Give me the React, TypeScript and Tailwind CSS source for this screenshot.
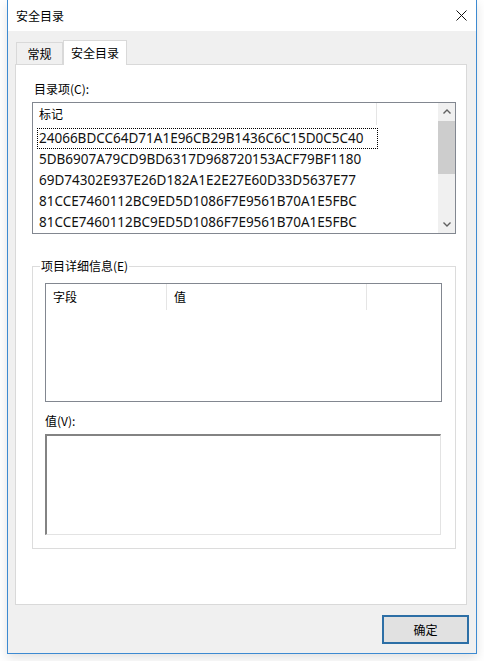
import React from "react";

const rows = [
  "24066BDCC64D71A1E96CB29B1436C6C15D0C5C40",
  "5DB6907A79CD9BD6317D968720153ACF79BF1180",
  "69D74302E937E26D182A1E2E27E60D33D5637E77",
  "81CCE7460112BC9ED5D1086F7E9561B70A1E5FBC",
  "81CCE7460112BC9ED5D1086F7E9561B70A1E5FBC",
];

const cjk = { fontFamily: '"Noto Sans CJK SC", "Noto Sans", sans-serif' };
const latin = { fontFamily: '"Noto Sans", "Noto Sans CJK SC", sans-serif' };

function Chevron({ up }: { up?: boolean }) {
  return (
    <svg width="8" height="5" viewBox="0 0 8 5">
      <polyline
        points={up ? "0.5,4.5 4,1 7.5,4.5" : "0.5,0.5 4,4 7.5,0.5"}
        fill="none"
        stroke="#606060"
        strokeWidth="1.4"
      />
    </svg>
  );
}

export default function App() {
  return (
    <div className="min-h-screen bg-white text-black" style={cjk}>
      {/* window */}
      <div className="ml-[7px] w-[470px] h-[654px] border border-t-0 border-[#3d8ad1] bg-[#f0f0f0] flex flex-col shadow-[0_4px_10px_rgba(0,0,0,0.12)]">
        {/* title bar */}
        <div className="h-[31px] bg-white flex items-center justify-between pl-[8px] pr-[9px] shrink-0">
          <span className="text-[12px] leading-[16px]">安全目录</span>
          <svg width="11" height="11" viewBox="0 0 11 11">
            <path d="M0.5 0.5 L10.5 10.5 M10.5 0.5 L0.5 10.5" stroke="#111" strokeWidth="1" />
          </svg>
        </div>

        <div className="px-[7px] pt-[9px] flex flex-col">
          {/* tabs */}
          <div className="flex items-end h-[24px] pl-[1px]">
            <div className="w-[47px] h-[22px] border border-b-0 border-[#d9d9d9] bg-[#f0f0f0] text-[12px] flex items-center justify-center">
              常规
            </div>
            <div className="relative z-10 -mb-px w-[64px] h-[25px] border border-b-0 border-[#d9d9d9] bg-white text-[12px] flex items-center justify-center">
              安全目录
            </div>
          </div>

          {/* tab panel */}
          <div className="w-[452px] h-[541px] bg-white border border-[#d9d9d9] flex flex-col">
            <div className="ml-[18px] mt-[16px] text-[12px] leading-[16px]">目录项(C):</div>

            {/* catalog list */}
            <div className="ml-[16px] mt-[5px] w-[424px] h-[132px] border border-[#828790] flex">
              <div className="flex-1 flex flex-col">
                <div className="h-[22px] flex">
                  <div className="w-[344px] border-r border-[#e5e5e5] pl-[6px] text-[12px] flex items-center">
                    标记
                  </div>
                </div>
                <div className="pt-[3px] flex flex-col" style={latin}>
                  {rows.map((r, i) => (
                    <div
                      key={i}
                      className={`ml-[4px] w-[341px] h-[21px] pl-[1px] text-[13.5px] text-[#111] flex items-center whitespace-nowrap overflow-hidden ${
                        i === 0 ? "border border-dotted border-black" : "border border-transparent"
                      }`}
                    >
                      {r}
                    </div>
                  ))}
                </div>
              </div>
              <div className="w-[17px] bg-[#f0f0f0] flex flex-col">
                <div className="h-[17px] flex items-center justify-center">
                  <Chevron up />
                </div>
                <div className="h-[53px] bg-[#cdcdcd] mt-[1px]" />
                <div className="flex-1" />
                <div className="h-[17px] flex items-center justify-center">
                  <Chevron />
                </div>
              </div>
            </div>

            {/* details group */}
            <fieldset className="ml-[16px] mt-[24px] w-[424px] h-[291px] border border-[#dcdcdc] flex flex-col">
              <legend className="ml-[7px] px-[1px] text-[12px] leading-[16px]">项目详细信息(E)</legend>

              <div className="ml-[12px] mt-[9px] w-[397px] h-[119px] border border-[#828790] flex flex-col">
                <div className="h-[26px] flex text-[12px]">
                  <div className="w-[121px] border-r border-[#e5e5e5] pl-[7px] flex items-center">字段</div>
                  <div className="w-[200px] border-r border-[#e5e5e5] pl-[7px] flex items-center">值</div>
                </div>
              </div>

              <div className="ml-[12px] mt-[11px] text-[12px] leading-[16px]">值(V):</div>
              <div className="ml-[12px] mt-[5px] w-[396px] h-[101px] border-t-2 border-l-2 border-r border-b border-t-[#838383] border-l-[#838383] border-r-[#e3e3e3] border-b-[#e3e3e3] bg-white" />
            </fieldset>
          </div>

          {/* button */}
          <div className="flex justify-end mt-[10px]">
            <button className="w-[87px] h-[29px] border-2 border-[#2d6fa6] bg-[#e1e1e1] text-[12px] flex items-center justify-center">
              确定
            </button>
          </div>
        </div>
      </div>
    </div>
  );
}
